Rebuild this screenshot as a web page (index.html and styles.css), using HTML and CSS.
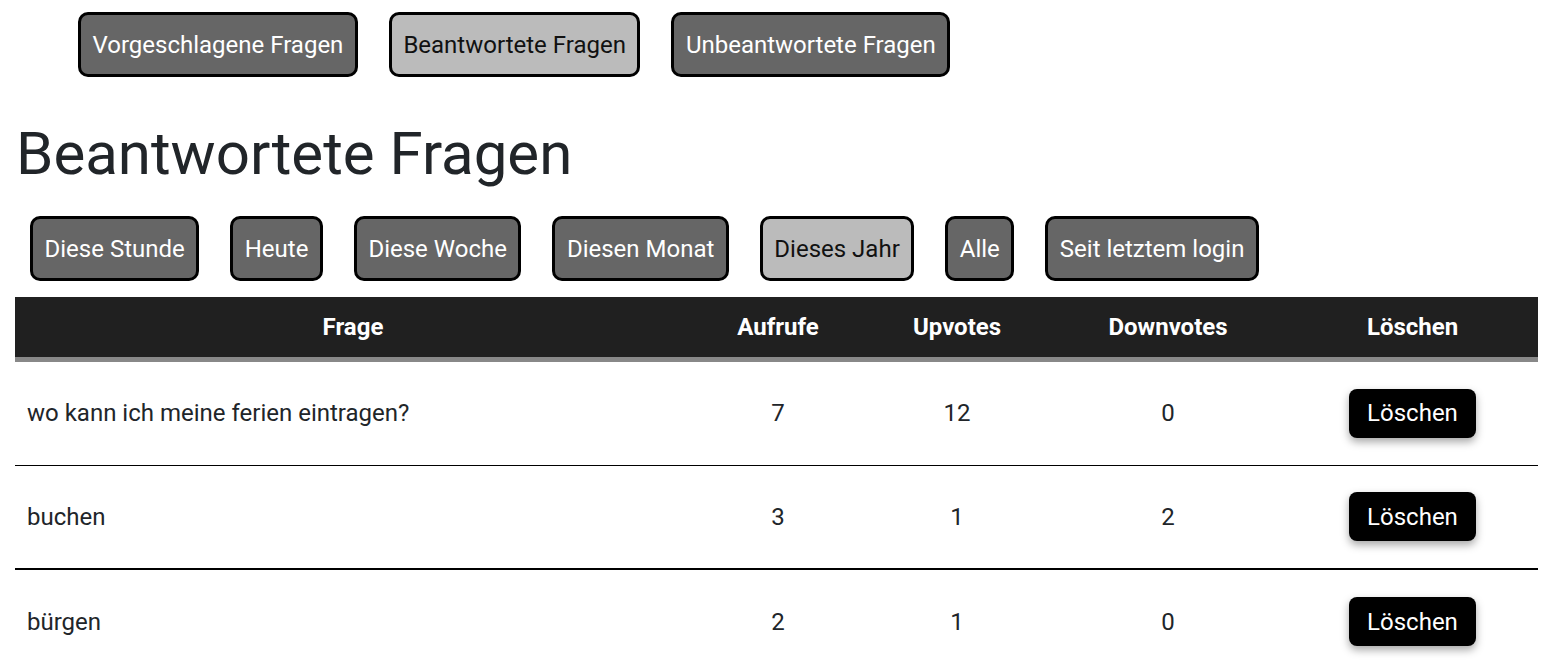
FILE: index.html
```html
<!DOCTYPE html>
<html lang="de">
<head>
<meta charset="utf-8">
<title>Beantwortete Fragen</title>
<link rel="stylesheet" href="styles.css">
</head>
<body>
<nav class="tabs">
  <button class="btn">Vorgeschlagene Fragen</button>
  <button class="btn active">Beantwortete Fragen</button>
  <button class="btn">Unbeantwortete Fragen</button>
</nav>
<h1 class="title">Beantwortete Fragen</h1>
<div class="filters">
  <button class="btn">Diese Stunde</button>
  <button class="btn">Heute</button>
  <button class="btn">Diese Woche</button>
  <button class="btn">Diesen Monat</button>
  <button class="btn active">Dieses Jahr</button>
  <button class="btn">Alle</button>
  <button class="btn">Seit letztem login</button>
</div>
<table class="questions">
  <colgroup>
    <col class="c-frage"><col class="c-aufrufe"><col class="c-up"><col class="c-down"><col class="c-del">
  </colgroup>
  <thead>
    <tr><th>Frage</th><th>Aufrufe</th><th>Upvotes</th><th>Downvotes</th><th>Löschen</th></tr>
  </thead>
  <tbody>
    <tr class="first"><td class="q">wo kann ich meine ferien eintragen?</td><td>7</td><td>12</td><td>0</td><td><button class="del">Löschen</button></td></tr>
    <tr class="thick"><td class="q">buchen</td><td>3</td><td>1</td><td>2</td><td><button class="del">Löschen</button></td></tr>
    <tr class="thick"><td class="q">bürgen</td><td>2</td><td>1</td><td>0</td><td><button class="del">Löschen</button></td></tr>
  </tbody>
</table>
</body>
</html>
```
FILE: styles.css
```css
* { box-sizing: border-box; }
body {
  margin: 0;
  font-family: Roboto, "Liberation Sans", sans-serif;
  color: #212529;
  background: #fff;
}
.tabs {
  display: flex;
  gap: 31px;
  padding: 12px 0 0 78px;
}
.btn {
  font-family: Roboto, "Liberation Sans", sans-serif;
  font-size: 24px;
  line-height: 28px;
  height: 65px;
  padding: 0 11.5px;
  border: 3px solid #000;
  border-radius: 10px;
  background: #666;
  color: #fff;
}
.btn.active {
  background: #bbb;
  color: #111;
}
.title {
  margin: 39px 0 0 16px;
  font-size: 60px;
  font-weight: 400;
  line-height: 76px;
  color: #212529;
}
.filters {
  display: flex;
  gap: 31px;
  padding: 0 0 0 30px;
  margin-top: 24px;
}
.questions {
  margin: 16px 0 0 15px;
  width: 1523px;
  border-collapse: collapse;
  table-layout: fixed;
  font-size: 24px;
}
.c-frage { width: 676px; }
.c-aufrufe { width: 174px; }
.c-up { width: 184px; }
.c-down { width: 238px; }
.c-del { width: 251px; }
.questions th {
  background: #202020;
  color: #fff;
  font-weight: 700;
  height: 62px;
  border-bottom: 5px solid #888;
  padding: 0;
}
.questions td {
  height: 104px;
  text-align: center;
  padding: 0;
  color: #212529;
}
.questions tr.first td { height: 106px; }
.questions td.q {
  text-align: left;
  padding-left: 12px;
}
.questions tr.thick td { border-top: 1px solid #000; }
.questions tbody tr.thick:last-child td { border-top-width: 2px; }
.del {
  font-family: Roboto, "Liberation Sans", sans-serif;
  font-size: 24px;
  background: #000;
  color: #fff;
  border: 0;
  border-radius: 8px;
  width: 127px;
  height: 49px;
  box-shadow: 0 4px 8px rgba(0,0,0,0.35);
}
```
